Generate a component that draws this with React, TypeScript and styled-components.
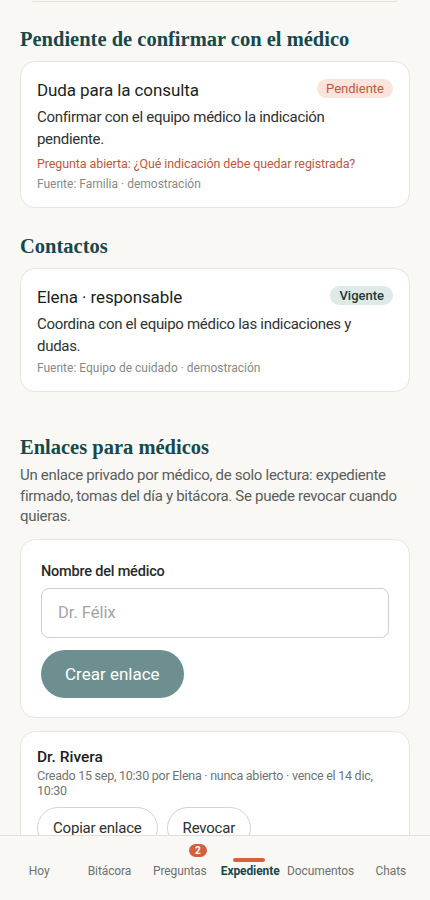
import React from "react";
import styled, { createGlobalStyle } from "styled-components";

const GlobalStyle = createGlobalStyle`
  html, body {
    margin: 0;
    padding: 0;
    background: #f9f8f5;
    font-family: Roboto, "Noto Sans", sans-serif;
    color: #1f2422;
  }
  * { box-sizing: border-box; }
`;

const Page = styled.div`
  padding: 0 20px 90px;
`;

const ScrolledCardEdge = styled.div`
  margin: 0 12px;
  height: 2px;
  border-bottom: 1px solid #e6e2dc;
  border-radius: 0 0 12px 12px;
`;

const SectionTitle = styled.h2<{ $top: number }>`
  font-family: "Liberation Serif", "DejaVu Serif", serif;
  font-weight: 700;
  font-size: 20.5px;
  line-height: 26px;
  color: #17484a;
  margin: ${(p) => p.$top}px 0 9px;
`;

const Intro = styled.p`
  margin: -4px 0 12px;
  font-size: 15px;
  line-height: 20.5px;
  letter-spacing: -0.3px;
  color: #595e5b;
`;

const Card = styled.div<{ $pad?: string }>`
  background: #fff;
  border: 1px solid #e8e4de;
  border-radius: 15px;
  padding: ${(p) => p.$pad ?? "16px 16px 14px"};
  margin-bottom: 13px;
`;

const CardHead = styled.div`
  display: flex;
  align-items: flex-start;
  justify-content: space-between;
  gap: 10px;
`;

const CardTitle = styled.div`
  font-size: 17px;
  line-height: 24px;
  font-weight: 400;
  letter-spacing: -0.1px;
  color: #1a1f1d;
`;

const Badge = styled.span<{ $tone: "warn" | "ok" }>`
  flex: none;
  margin-top: 1px;
  font-size: 13px;
  line-height: 19px;
  padding: 0 9px;
  border-radius: 10px;
  font-weight: ${(p) => (p.$tone === "ok" ? 500 : 400)};
  background: ${(p) => (p.$tone === "warn" ? "#fbe4db" : "#dfeae8")};
  color: ${(p) => (p.$tone === "warn" ? "#c4583b" : "#1e3a38")};
`;

const Body = styled.p`
  margin: 4px 0 0;
  font-size: 15px;
  line-height: 22px;
  letter-spacing: -0.3px;
  color: #2e3331;
`;

const Question = styled.p`
  margin: 5px 0 0;
  font-size: 12.5px;
  line-height: 18px;
  letter-spacing: -0.1px;
  color: #c2573a;
`;

const Source = styled.p`
  margin: 2px 0 0;
  font-size: 12px;
  line-height: 18px;
  color: #858a88;
`;

const Label = styled.label`
  display: block;
  font-size: 14.5px;
  line-height: 20px;
  font-weight: 500;
  letter-spacing: -0.2px;
  color: #262b29;
  margin-bottom: 6px;
`;

const Input = styled.input`
  display: block;
  width: 100%;
  height: 50px;
  border: 1px solid #cfcfcc;
  border-radius: 8px;
  padding: 0 16px;
  font-family: inherit;
  font-size: 16.5px;
  color: #1f2422;
  background: #fff;
  &::placeholder {
    color: #a3a6a4;
  }
`;

const PrimaryButton = styled.button`
  display: block;
  margin-top: 12px;
  height: 48px;
  padding: 0 24px;
  border: none;
  border-radius: 24px;
  background: #6e8f8f;
  color: #fff;
  font-family: inherit;
  font-size: 17px;
`;

const LinkName = styled.div`
  font-size: 15.5px;
  line-height: 20px;
  font-weight: 500;
  color: #1c211f;
`;

const LinkMeta = styled.p`
  margin: 1px 0 0;
  font-size: 12.5px;
  line-height: 15.5px;
  letter-spacing: -0.25px;
  color: #6f7472;
`;

const ButtonRow = styled.div`
  display: flex;
  gap: 9px;
  margin-top: 8px;
`;

const OutlineButton = styled.button`
  height: 42px;
  padding: 0 15px;
  border: 1px solid #d3d3d0;
  border-radius: 21px;
  background: #fff;
  font-family: inherit;
  font-size: 15px;
  letter-spacing: -0.2px;
  color: #2b302e;
`;

const Nav = styled.nav`
  position: fixed;
  left: 0;
  right: 0;
  bottom: 0;
  height: 65px;
  padding: 0 4px;
  background: #f9f8f5;
  border-top: 1px solid #e2dfda;
  display: grid;
  grid-template-columns: repeat(6, 1fr);
`;

const NavItem = styled.div<{ $active?: boolean }>`
  position: relative;
  display: flex;
  justify-content: center;
  padding-top: 27px;
  font-size: 12px;
  line-height: 16px;
  letter-spacing: -0.1px;
  color: ${(p) => (p.$active ? "#17484a" : "#6d7270")};
  font-weight: ${(p) => (p.$active ? 700 : 400)};
  white-space: nowrap;
`;

const ActiveBar = styled.span`
  position: absolute;
  top: 22px;
  left: 50%;
  width: 32px;
  height: 4px;
  margin-left: -17px;
  border-radius: 2px;
  background: #d8603c;
`;

const CountBadge = styled.span`
  position: absolute;
  top: 8px;
  left: 50%;
  margin-left: 9px;
  min-width: 18px;
  height: 13px;
  border-radius: 7px;
  background: #d45f3c;
  color: #fff;
  font-size: 10px;
  font-weight: 700;
  line-height: 13px;
  text-align: center;
`;

const tabs = ["Hoy", "Bitácora", "Preguntas", "Expediente", "Documentos", "Chats"];

export default function App() {
  return (
    <>
      <GlobalStyle />
      <Page>
        <ScrolledCardEdge />
        <SectionTitle $top={24}>Pendiente de confirmar con el médico</SectionTitle>
        <Card>
          <CardHead>
            <CardTitle>Duda para la consulta</CardTitle>
            <Badge $tone="warn">Pendiente</Badge>
          </CardHead>
          <Body>Confirmar con el equipo médico la indicación pendiente.</Body>
          <Question>Pregunta abierta: ¿Qué indicación debe quedar registrada?</Question>
          <Source>Fuente: Familia · demostración</Source>
        </Card>

        <SectionTitle $top={25}>Contactos</SectionTitle>
        <Card>
          <CardHead>
            <CardTitle>Elena · responsable</CardTitle>
            <Badge $tone="ok">Vigente</Badge>
          </CardHead>
          <Body>Coordina con el equipo médico las indicaciones y dudas.</Body>
          <Source>Fuente: Equipo de cuidado · demostración</Source>
        </Card>

        <SectionTitle $top={42}>Enlaces para médicos</SectionTitle>
        <Intro>
          Un enlace privado por médico, de solo lectura: expediente firmado, tomas del día y
          bitácora. Se puede revocar cuando quieras.
        </Intro>
        <Card $pad="22px 20px 19px">
          <Label>Nombre del médico</Label>
          <Input placeholder="Dr. Félix" />
          <PrimaryButton>Crear enlace</PrimaryButton>
        </Card>

        <Card $pad="15px 16px 16px">
          <LinkName>Dr. Rivera</LinkName>
          <LinkMeta>
            Creado 15 sep, 10:30 por Elena · nunca abierto · vence el 14 dic, 10:30
          </LinkMeta>
          <ButtonRow>
            <OutlineButton>Copiar enlace</OutlineButton>
            <OutlineButton>Revocar</OutlineButton>
          </ButtonRow>
        </Card>
      </Page>
      <Nav>
        {tabs.map((t) => (
          <NavItem key={t} $active={t === "Expediente"}>
            {t === "Expediente" && <ActiveBar />}
            {t === "Preguntas" && <CountBadge>2</CountBadge>}
            {t}
          </NavItem>
        ))}
      </Nav>
    </>
  );
}
